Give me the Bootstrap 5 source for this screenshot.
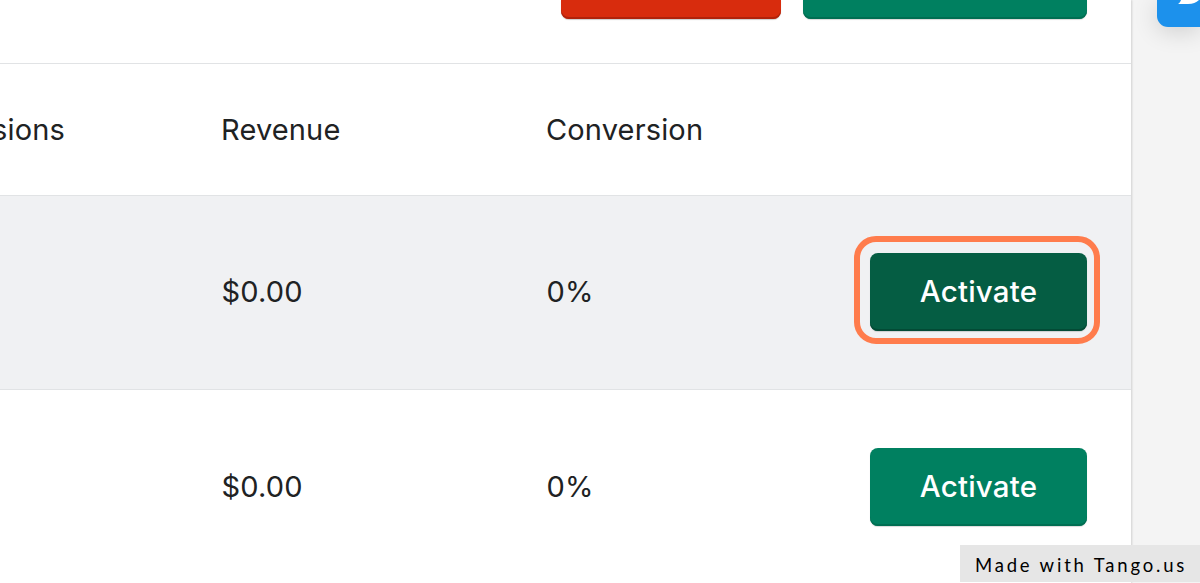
<!DOCTYPE html>
<html lang="en">
<head>
  <meta charset="UTF-8">
  <meta name="viewport" content="width=device-width, initial-scale=1">
  <title>Offers</title>

  <link href="https://cdn.jsdelivr.net/npm/bootstrap@5.3.0/dist/css/bootstrap.min.css" rel="stylesheet">

  <style>
    body {
      background-color: #f4f4f4;
      font-family: Inter, "Liberation Sans", sans-serif;
      font-size: 29px;
      line-height: 40px;
      letter-spacing: .15px;
      color: #202223;
      height: 583px;
    }
    .panel {
      width: 1131px;
      height: 583px;
      box-shadow: 1px 0 2px rgba(0, 0, 0, .15);
    }
    .panel-actions {
      height: 64px;
      padding-right: 44px;
      gap: 22px;
    }
    .panel-actions .btn {
      height: 19px;
      border-radius: 0 0 8px 8px;
    }
    .btn-remove { width: 220px; }
    .btn-create { width: 284px; }
    .line-below {
      border-bottom: 1px solid #e1e3e5;
    }
    .header-row { height: 132px; }
    .offer-row { height: 194px; }
    .offer-row.hovered {
      padding-bottom: 1px;
      background-color: #f0f1f3;
    }
    .col-sessions {
      width: 221px;
      padding-right: 156px;
    }
    .col-revenue { width: 325px; }
    .offer-row .col-sessions { width: 221.5px; }
    .col-action { padding-right: 44px; }
    .btn-red, .btn-red:hover {
      background-color: #d82c0d;
      box-shadow: inset 0 -2px 0 #b0220a, 0 1px 1px rgba(0, 0, 0, .2);
    }
    .btn-green, .btn-green:hover {
      background-color: #008060;
      box-shadow: inset 0 -2px 0 #006e52, 0 1px 1px rgba(0, 0, 0, .15);
      color: #fff;
    }
    .btn-green.pressed {
      background-color: #055d43;
      box-shadow: inset 0 -2px 0 #034a35, 0 1px 1px rgba(0, 0, 0, .15);
    }
    .btn-activate {
      width: 217px;
      height: 78px;
      border-radius: 8px;
      font-size: 29.5px;
      font-weight: 500;
      line-height: 76px;
      letter-spacing: .2px;
    }
    .highlight-ring {
      top: -17px;
      left: -16px;
      width: 246px;
      height: 108px;
      border: 6px solid #ff7c4c;
      border-radius: 22px;
    }
    .chat-launcher {
      top: 0;
      left: 1157px;
      width: 43px;
      height: 27px;
      background-color: #1c91ec;
      border-radius: 0 0 0 11px;
      box-shadow: 0 4px 24px rgba(0, 0, 0, .16);
    }
    .made-with {
      right: 0;
      top: 545px;
      width: 240px;
      height: 37px;
      padding-left: 15px;
      background-color: #e6e6e6;
      color: #000;
      font-family: Lato, "Liberation Sans", sans-serif;
      font-size: 18.5px;
      line-height: 40px;
      letter-spacing: 2.8px;
    }
  </style>
</head>
<body class="position-relative overflow-hidden">

<main class="panel bg-white">
  <!-- Page actions -->
  <div class="panel-actions line-below d-flex justify-content-end align-items-start">
    <button type="button" class="btn btn-red btn-remove border-0 p-0" aria-label="Remove"></button>
    <button type="button" class="btn btn-green btn-create border-0 p-0" aria-label="Create"></button>
  </div>

  <!-- Column headings -->
  <div class="header-row line-below d-flex align-items-center">
    <div class="col-sessions d-flex justify-content-end flex-shrink-0"><span>sessions</span></div>
    <div class="col-revenue flex-shrink-0"><span>Revenue</span></div>
    <div><span>Conversion</span></div>
  </div>

  <!-- Offers -->
  <div class="offer-row hovered line-below d-flex align-items-center">
    <div class="col-sessions flex-shrink-0"></div>
    <div class="col-revenue flex-shrink-0"><span>$0.00</span></div>
    <div><span>0%</span></div>
    <div class="col-action ms-auto">
      <div class="position-relative">
        <button type="button" class="btn btn-green pressed btn-activate d-flex justify-content-center align-items-start border-0 p-0">Activate</button>
        <div class="highlight-ring position-absolute pe-none"></div>
      </div>
    </div>
  </div>
  <div class="offer-row d-flex align-items-center">
    <div class="col-sessions flex-shrink-0"></div>
    <div class="col-revenue flex-shrink-0"><span>$0.00</span></div>
    <div><span>0%</span></div>
    <div class="col-action ms-auto">
      <button type="button" class="btn btn-green btn-activate d-flex justify-content-center align-items-start border-0 p-0">Activate</button>
    </div>
  </div>
</main>

<!-- Chat launcher -->
<div class="chat-launcher position-absolute overflow-visible">
  <svg class="d-block" width="43" height="27" viewBox="0 0 43 27" aria-hidden="true">
    <path d="M24 0C23.600 1.500 22.500 3 21 4H31C36 4 39 2.500 42 0Z" fill="#fff"/>
  </svg>
</div>

<div class="made-with position-absolute text-nowrap">Made with Tango.us</div>

<script src="https://cdn.jsdelivr.net/npm/bootstrap@5.3.0/dist/js/bootstrap.bundle.min.js"></script>
</body>
</html>
